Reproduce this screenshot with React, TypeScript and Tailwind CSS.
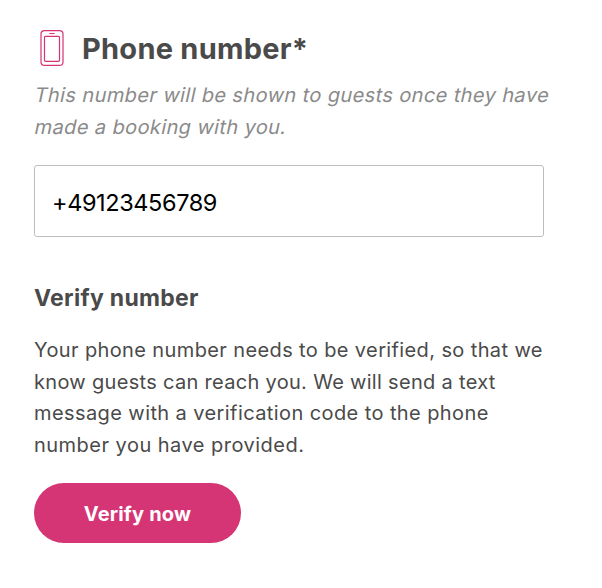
import { useState } from "react"

const HINT_LINES = [
  "This number will be shown to guests once they have",
  "made a booking with you.",
]

const BODY_LINES = [
  { text: "Your phone number needs to be verified, so that we", tracking: "tracking-[0.38px]" },
  { text: "know guests can reach you. We will send a text", tracking: "tracking-[0.31px]" },
  { text: "message with a verification code to the phone", tracking: "tracking-[0.41px]" },
  { text: "number you have provided.", tracking: "tracking-[0.48px]" },
]

function PhoneIcon() {
  return (
    <svg width="24" height="36" viewBox="0 0 24 36" fill="none" stroke="#d63575" strokeWidth="1.2">
      <rect x="1" y="0.6" width="22" height="34.8" rx="3.5" />
      <rect x="4.5" y="6.3" width="15" height="25" rx="1" />
      <path d="M9.8 3.5h4.4" strokeLinecap="round" />
    </svg>
  )
}

export default function App() {
  const [phone, setPhone] = useState("+49123456789")

  return (
    <main className="h-[588px] w-[602px] bg-white px-[34px] pt-[28px] font-['Inter',sans-serif] text-[#4a4a4a]">
      <header className="flex h-10 items-center gap-[18px] pl-[6px]">
        <PhoneIcon />
        <h1 className="pt-px text-[29px] font-bold tracking-[0.25px]">Phone number*</h1>
      </header>

      {/* slanted upright letters, so the two-storey "a" is kept */}
      <div className="mt-[11px] pl-px text-[20px] leading-8 tracking-[0.39px] whitespace-nowrap text-[#8a8a8a]">
        {HINT_LINES.map((line) => (
          <p key={line} className="-skew-x-12">
            {line}
          </p>
        ))}
      </div>

      <input
        aria-label="Phone number"
        type="tel"
        value={phone}
        onChange={(e) => setPhone(e.target.value)}
        className="mt-[22px] block h-[72px] w-[510px] rounded-[3px] border border-[#bdbdbd] px-[17px] pt-[3px] text-[23.5px] tracking-[-0.4px] text-black outline-none"
      />

      <h2 className="mt-[45px] text-[23px] leading-8 font-bold tracking-[0.3px]">Verify number</h2>
      <div className="mt-[21px] text-[20px] leading-[31.7px] whitespace-nowrap">
        {BODY_LINES.map(({ text, tracking }) => (
          <p key={text} className={tracking}>
            {text}
          </p>
        ))}
      </div>

      <button className="mt-[21px] h-[60px] w-[207px] rounded-full bg-[#d63575] pt-[2px] text-[20px] font-bold tracking-[0.2px] text-white">
        Verify now
      </button>
    </main>
  )
}
